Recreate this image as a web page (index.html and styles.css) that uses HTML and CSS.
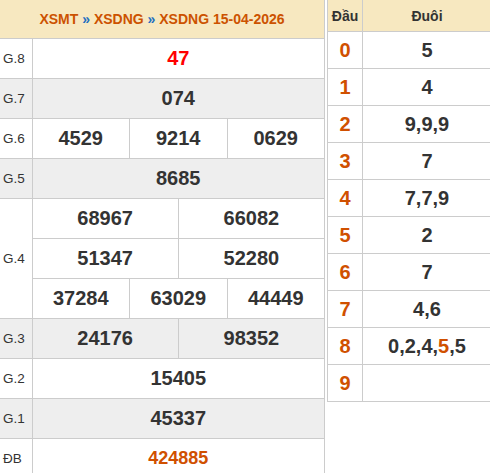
FILE: index.html
```html
<!DOCTYPE html>
<html>
<head>
<meta charset="utf-8">
<link rel="stylesheet" href="styles.css">
</head>
<body>
<div class="wrap">
  <table class="kq">
    <colgroup>
      <col class="c-lbl"><col><col><col><col><col><col>
    </colgroup>
    <thead>
      <tr><th colspan="7" class="title">XSMT <span class="sep">»</span> XSDNG <span class="sep">»</span> XSDNG 15-04-2026</th></tr>
    </thead>
    <tbody>
      <tr><td class="lbl">G.8</td><td colspan="6" class="num red">47</td></tr>
      <tr class="alt"><td class="lbl">G.7</td><td colspan="6" class="num">074</td></tr>
      <tr><td class="lbl">G.6</td><td colspan="2" class="num">4529</td><td colspan="2" class="num">9214</td><td colspan="2" class="num">0629</td></tr>
      <tr class="alt"><td class="lbl">G.5</td><td colspan="6" class="num">8685</td></tr>
      <tr><td class="lbl" rowspan="3">G.4</td><td colspan="3" class="num">68967</td><td colspan="3" class="num">66082</td></tr>
      <tr><td colspan="3" class="num">51347</td><td colspan="3" class="num">52280</td></tr>
      <tr><td colspan="2" class="num">37284</td><td colspan="2" class="num">63029</td><td colspan="2" class="num">44449</td></tr>
      <tr class="alt"><td class="lbl">G.3</td><td colspan="3" class="num">24176</td><td colspan="3" class="num">98352</td></tr>
      <tr><td class="lbl">G.2</td><td colspan="6" class="num">15405</td></tr>
      <tr class="alt"><td class="lbl">G.1</td><td colspan="6" class="num">45337</td></tr>
      <tr><td class="lbl">ĐB</td><td colspan="6" class="num orange">424885</td></tr>
    </tbody>
  </table>
  <table class="loto">
    <thead>
      <tr><th class="dau">Đầu</th><th>Đuôi</th></tr>
    </thead>
    <tbody>
      <tr><td class="d">0</td><td class="v">5</td></tr>
      <tr><td class="d">1</td><td class="v">4</td></tr>
      <tr><td class="d">2</td><td class="v">9,9,9</td></tr>
      <tr><td class="d">3</td><td class="v">7</td></tr>
      <tr><td class="d">4</td><td class="v">7,7,9</td></tr>
      <tr><td class="d">5</td><td class="v">2</td></tr>
      <tr><td class="d">6</td><td class="v">7</td></tr>
      <tr><td class="d">7</td><td class="v">4,6</td></tr>
      <tr><td class="d">8</td><td class="v">0,2,4,<span class="hl">5</span>,5</td></tr>
      <tr><td class="d">9</td><td class="v"></td></tr>
    </tbody>
  </table>
</div>
</body>
</html>
```

FILE: styles.css
```css
html, body {
  margin: 0;
  padding: 0;
  background: #fff;
  overflow: hidden;
}
body {
  font-family: "Liberation Sans", Arial, sans-serif;
  color: #333;
}
.wrap {
  display: flex;
  align-items: flex-start;
  width: 490px;
  overflow: hidden;
}
table {
  border-collapse: collapse;
  table-layout: fixed;
  flex: none;
}
.kq {
  width: 325px;
}
.kq col.c-lbl {
  width: 32px;
}
.kq td, .kq th {
  border: 1px solid #ccc;
  padding: 0;
}
.kq tr > :first-child {
  border-left: none;
}
.kq thead th {
  border-top: none;
}
.title {
  height: 38px;
  background: #f7e8c0;
  color: #cc5200;
  font-size: 14px;
  font-weight: bold;
  text-align: center;
}
.sep {
  color: #1f6fc0;
}
.kq tbody td {
  height: 39px;
}
.lbl {
  font-size: 13.5px;
  text-align: left;
  padding-left: 3px !important;
  vertical-align: middle;
}
.num {
  font-size: 20px;
  font-weight: bold;
  text-align: center;
}
.alt td {
  background: #eee;
}
.red {
  color: #f00;
}
.orange {
  color: #d05000;
  font-size: 18px;
}
.loto {
  width: 165px;
  margin-left: 2px;
}
.loto th, .loto td {
  border: 1px solid #ccc;
  padding: 0;
  text-align: center;
}
.loto thead th {
  border-top: none;
  height: 31px;
  background: #f7e8c0;
  font-size: 14px;
  font-weight: bold;
  color: #333;
}
.loto th.dau {
  width: 34px;
}
.loto tbody td {
  height: 36px;
  font-size: 20px;
  font-weight: bold;
}
.d {
  color: #d05000;
}
.hl {
  color: #d05000;
}
```
